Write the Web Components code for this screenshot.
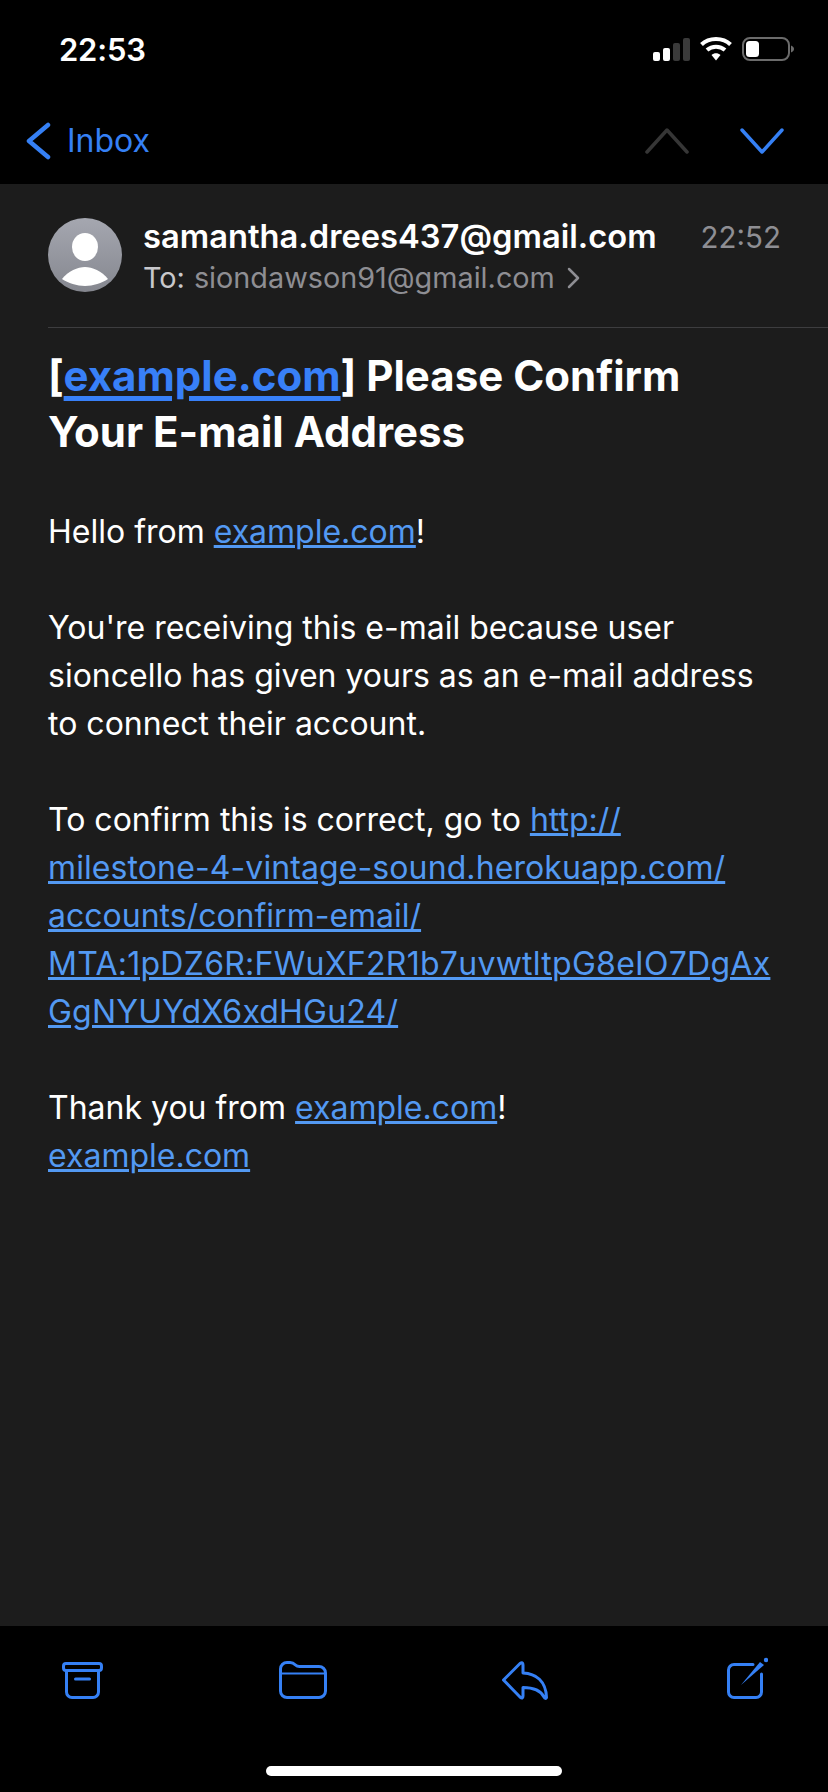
<!DOCTYPE html>
<html>
<head>
<meta charset="utf-8">
<title>Mail</title>
<style>
  html, body { margin: 0; padding: 0; background: #000; }
  body { width: 828px; height: 1792px; font-family: Inter, "Liberation Sans", sans-serif; color: #fff; }
  .page { display: flex; flex-direction: column; height: 1792px; }
  mail-view { flex: 1; }
  mail-body p { margin: 0 0 48px; }
  mail-body a { color: #5399f2; text-decoration: underline; text-decoration-thickness: 2.5px; text-underline-offset: 2px; }
  mail-body a.host { letter-spacing: 0.1px; }
  mail-body a.token { letter-spacing: 0.27px; }
  mail-body a.tail { letter-spacing: 0.2px; }
</style>
</head>
<body>
<div class="page">
  <status-bar time="22:53"></status-bar>
  <nav-bar label="Inbox"></nav-bar>
  <mail-view>
    <mail-header from="samantha.drees437@gmail.com" to="siondawson91@gmail.com" time="22:52"></mail-header>
    <mail-subject>[<a>example.com</a>] Please Confirm<br>Your E-mail Address</mail-subject>
    <mail-body>
      <p>Hello from <a>example.com</a>!</p>
      <p>You're receiving this e-mail because user<br>sioncello has given yours as an e-mail address<br>to connect their account.</p>
      <p>To confirm this is correct, go to <a>http://</a><br><a class="host">milestone-4-vintage-sound.herokuapp.com/</a><br><a>accounts/confirm-email/</a><br><a class="token">MTA:1pDZ6R:FWuXF2R1b7uvwtltpG8eIO7DgAx</a><br><a class="tail">GgNYUYdX6xdHGu24/</a></p>
      <p>Thank you from <a>example.com</a>!<br><a>example.com</a></p>
    </mail-body>
  </mail-view>
  <tool-bar></tool-bar>
</div>

<script>
class StatusBar extends HTMLElement {
  constructor() {
    super();
    this.attachShadow({ mode: 'open' });
    this.shadowRoot.innerHTML = `
    <style>
      :host { display: flex; height: 88px; padding: 0 34px 0 59px; align-items: flex-start; justify-content: space-between; box-sizing: border-box; }
      .time { font-size: 31px; font-weight: 600; line-height: 38px; margin-top: 31px; letter-spacing: -0.2px; }
      svg { display: block; margin-top: 36px; }
    </style>
    <div class="time">${this.getAttribute('time')}</div>
    <svg width="142" height="26" viewBox="0 0 142 26">
      <rect x="1" y="16" width="7" height="9" rx="2" fill="#fff"/>
      <rect x="11" y="12" width="7" height="13" rx="2" fill="#fff"/>
      <rect x="21" y="7" width="7" height="18" rx="2" fill="#3a3a3a"/>
      <rect x="31" y="2" width="7" height="23" rx="2" fill="#3a3a3a"/>
      <path d="M49.5 8.5 C57 1.2 71 1.2 78.5 8.5" fill="none" stroke="#fff" stroke-width="4"/>
      <path d="M55 14 C60 9.5 68 9.5 73 14" fill="none" stroke="#fff" stroke-width="4"/>
      <path d="M59.5 19 L64 24.5 L68.5 19 C66 16.8 62 16.8 59.5 19 Z" fill="#fff"/>
      <rect x="91" y="2" width="46" height="22" rx="7" fill="none" stroke="#6b6b6b" stroke-width="2"/>
      <rect x="94" y="5" width="13" height="16" rx="3.5" fill="#fff"/>
      <path d="M139 9.5 C141 10.5 142 11.5 142 13 C142 14.5 141 15.5 139 16.5 Z" fill="#6b6b6b"/>
    </svg>`;
  }
}

class NavBar extends HTMLElement {
  constructor() {
    super();
    this.attachShadow({ mode: 'open' });
    this.shadowRoot.innerHTML = `
    <style>
      :host { display: flex; height: 96px; align-items: flex-start; box-sizing: border-box; padding: 32px 44px 0 25px; color: #3580f5; }
      .back { display: flex; align-items: center; gap: 16px; font-size: 32px; line-height: 42px; flex: 1; }
      .back svg { margin-top: -1px; }
      .arrows { display: flex; gap: 51px; margin-top: 8px; }
      svg { display: block; }
    </style>
    <div class="back">
      <svg width="26" height="38" viewBox="0 0 26 38"><path d="M23 3 L4 19 L23 35" fill="none" stroke="#3580f5" stroke-width="4.5" stroke-linecap="round" stroke-linejoin="round"/></svg>
      <span>${this.getAttribute('label')}</span>
    </div>
    <div class="arrows">
      <svg width="44" height="26" viewBox="0 0 44 26"><path d="M2 24 L22 2 L42 24" fill="none" stroke="#363636" stroke-width="3.5" stroke-linecap="round" stroke-linejoin="round"/></svg>
      <svg width="44" height="26" viewBox="0 0 44 26"><path d="M2 2 L22 24 L42 2" fill="none" stroke="#3580f5" stroke-width="3.5" stroke-linecap="round" stroke-linejoin="round"/></svg>
    </div>`;
  }
}

class MailView extends HTMLElement {
  constructor() {
    super();
    this.attachShadow({ mode: 'open' });
    this.shadowRoot.innerHTML = `
    <style>
      :host { display: block; background: #1c1c1c; padding-left: 48px; overflow: hidden; }
    </style>
    <slot></slot>`;
  }
}

class MailHeader extends HTMLElement {
  constructor() {
    super();
    this.attachShadow({ mode: 'open' });
    this.shadowRoot.innerHTML = `
    <style>
      :host { display: flex; gap: 21px; height: 144px; box-sizing: border-box; padding-top: 34px; border-bottom: 1px solid #3d3d3f; }
      .avatar { width: 74px; height: 74px; border-radius: 50%; background: linear-gradient(#a5a7b0, #85878f); overflow: hidden; flex: none; }
      .avatar svg { display: block; }
      .info { flex: 1; }
      .from { display: flex; justify-content: space-between; align-items: baseline; padding-right: 47px; line-height: 40px; margin-top: -2px; }
      .name { font-weight: 600; font-size: 32.7px; }
      .time { color: #8e8e93; font-size: 29.5px; }
      .to { font-size: 28.8px; line-height: 36px; margin-top: 3px; color: #c8c8cc; display: flex; align-items: center; }
      .to span { color: #8e8e93; margin-left: 9px; }
      .to svg { margin-left: 12px; }
    </style>
    <div class="avatar">
      <svg width="74" height="74" viewBox="0 0 74 74">
        <ellipse cx="37" cy="29" rx="13" ry="14" fill="#fff"/>
        <path d="M14 61 C20 53 30 49 37 49 C44 49 54 53 60 61 C54 65 45 68 37 68 C29 68 20 65 14 61 Z" fill="#fff"/>
      </svg>
    </div>
    <div class="info">
      <div class="from"><span class="name">${this.getAttribute('from')}</span><span class="time">${this.getAttribute('time')}</span></div>
      <div class="to">To:<span>${this.getAttribute('to')}</span>
        <svg width="13" height="22" viewBox="0 0 13 22"><path d="M2 2 L11 11 L2 20" fill="none" stroke="#8e8e93" stroke-width="2.5" stroke-linecap="round" stroke-linejoin="round"/></svg>
      </div>
    </div>`;
  }
}

class MailSubject extends HTMLElement {
  constructor() {
    super();
    this.attachShadow({ mode: 'open' });
    this.shadowRoot.innerHTML = `
    <style>
      :host { display: block; font-size: 42px; font-weight: 700; line-height: 56px; margin-top: 20px; margin-right: 48px; white-space: nowrap; }
      ::slotted(a) { color: #3880f8; text-decoration: underline; text-decoration-thickness: 5px; text-underline-offset: 5px; }
    </style>
    <slot></slot>`;
  }
}

class MailBody extends HTMLElement {
  constructor() {
    super();
    this.attachShadow({ mode: 'open' });
    this.shadowRoot.innerHTML = `
    <style>
      :host { display: block; font-size: 32px; line-height: 48px; margin-top: 48px; white-space: nowrap; }
    </style>
    <slot></slot>`;
  }
}

class ToolBar extends HTMLElement {
  constructor() {
    super();
    this.attachShadow({ mode: 'open' });
    this.shadowRoot.innerHTML = `
    <style>
      :host { display: block; height: 166px; box-sizing: border-box; padding-top: 30px; position: relative; }
      .icons { display: flex; gap: 170px; padding-left: 58px; }
      svg { display: block; }
      .home { position: absolute; left: 266px; top: 140px; width: 296px; height: 10px; border-radius: 5px; background: #fff; }
    </style>
    <div class="icons">
      <svg width="50" height="46" viewBox="0 0 50 46" fill="none" stroke="#3580f5" stroke-width="3" stroke-linecap="round" stroke-linejoin="round">
        <rect x="5.5" y="7.5" width="38" height="7" rx="2.5"/>
        <path d="M8.5 14.5 V36 a5.5 5.5 0 0 0 5.5 5.5 H35 a5.5 5.5 0 0 0 5.5 -5.5 V14.5"/>
        <path d="M17.5 23 H31.5"/>
      </svg>
      <svg width="50" height="46" viewBox="0 0 50 46" fill="none" stroke="#3580f5" stroke-width="3" stroke-linecap="round" stroke-linejoin="round">
        <path d="M2.5 13 a6.5 6.5 0 0 1 6.5 -6.5 H12 c3 0 4 1 5.5 2.5 c1 1 2 1.5 4 1.5 H41 a6.5 6.5 0 0 1 6.5 6.5 V35 a6.5 6.5 0 0 1 -6.5 6.5 H9 a6.5 6.5 0 0 1 -6.5 -6.5 Z"/>
        <path d="M2.5 17.5 H47.5" stroke-width="2"/>
      </svg>
      <svg width="50" height="46" viewBox="0 0 50 46" fill="none" stroke="#3580f5" stroke-width="3" stroke-linecap="round" stroke-linejoin="round">
        <path d="M5.5 24 L22 7.5 Q25 5.5 25 9 V17 C38 17.5 48 25 48.5 41.5 Q47.5 43.5 46 41 C43 35 37 31.5 25 31.5 V40 Q25 43.5 22 41 Z"/>
      </svg>
      <svg width="50" height="46" viewBox="0 0 50 46" fill="none" stroke="#3580f5" stroke-width="3" stroke-linecap="round" stroke-linejoin="round">
        <path d="M35 8.5 H16 a5.5 5.5 0 0 0 -5.5 5.5 V36 a5.5 5.5 0 0 0 5.5 5.5 H38 a5.5 5.5 0 0 0 5.5 -5.5 V18"/>
        <path d="M23 29 L42 6 L46 9 Z" fill="#3580f5" stroke="none"/>
        <circle cx="48" cy="4" r="2.2" fill="#3580f5" stroke="none"/>
      </svg>
    </div>
    <div class="home"></div>`;
  }
}

customElements.define('status-bar', StatusBar);
customElements.define('nav-bar', NavBar);
customElements.define('mail-view', MailView);
customElements.define('mail-header', MailHeader);
customElements.define('mail-subject', MailSubject);
customElements.define('mail-body', MailBody);
customElements.define('tool-bar', ToolBar);
</script>
</body>
</html>
